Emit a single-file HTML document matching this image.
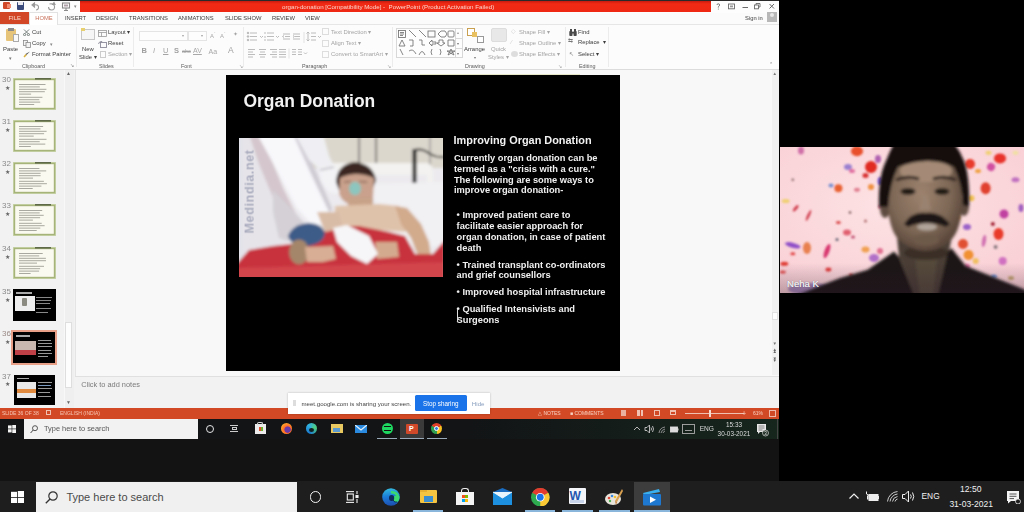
<!DOCTYPE html>
<html><head><meta charset="utf-8">
<style>
*{margin:0;padding:0;box-sizing:border-box}
#ppt{filter:blur(0.35px)}
html,body{width:1024px;height:512px;overflow:hidden;background:#000;font-family:"Liberation Sans",sans-serif}
.a{position:absolute}
#ppt{left:0;top:0;width:779px;height:408px;background:#f8f8f8;overflow:hidden}
.t{position:absolute;white-space:nowrap;line-height:1}
</style></head><body>
<!-- PowerPoint window -->
<div id="ppt" class="a">
  <!-- title bar -->
  <div class="a" style="left:0;top:0;width:779px;height:13px;background:#fdfdfd"></div>
  <div class="a" style="left:0;top:0;width:779px;height:1px;background:#2a2a2a"></div>
  <div class="a" style="left:80px;top:1px;width:631px;height:11px;background:linear-gradient(#c81a10,#f02a14 25%,#ee2812)"></div>
  <!-- tabs row -->
  <div class="a" style="left:0;top:13px;width:779px;height:11px;background:#fbfbfb"></div>
  <div class="a" style="left:0;top:12px;width:29px;height:12px;background:#d24625"></div>
  <!-- ribbon -->
  <div class="a" style="left:0;top:24px;width:779px;height:45px;background:#fcfcfc;border-top:1px solid #e6e6e6"></div>
  <div class="a" style="left:0;top:69px;width:779px;height:1px;background:#dcdcdc"></div>
  <!-- QAT icons -->
  <div class="a" style="left:3px;top:2px;width:7px;height:7px;background:#d04a2a;border-radius:1px"></div>
  <div class="a" style="left:7px;top:4px;width:4px;height:4px;background:#f08a70"></div>
  <div class="a" style="left:17px;top:2px;width:7px;height:8px;background:#3a4a7a;border-radius:1px"></div>
  <div class="a" style="left:18px;top:2px;width:5px;height:3px;background:#e8e8f0"></div>
  <svg class="a" style="left:30px;top:1px" width="42" height="11" viewBox="0 0 42 11" fill="none" stroke="#9a9a9a" stroke-width="1.1">
    <path d="M2 4 L4.5 2 L4.5 6 Z" fill="#9a9a9a"/><path d="M4 4 Q9 3 8.5 7 Q8 9 6 9"/>
    <path d="M19.5 3 Q23.5 2 24.5 5 Q25 9 21.5 9 Q18.5 9 18.5 6" /><path d="M24 1.5 L25 3.5 L22.5 3.5Z" fill="#9a9a9a"/>
    <rect x="32.5" y="2" width="7" height="5" stroke="#8a8a8a"/><rect x="34" y="3.5" width="4" height="2" fill="#b0a0a8" stroke="none"/><path d="M36 7 L36 9.5 M34 9.5 L38 9.5" stroke="#8a8a8a"/>
  </svg>
  <div class="t" style="left:74px;top:4px;font-size:5px;color:#888">&#9662;</div>
  <div class="t" style="left:282px;top:3.5px;font-size:6.2px;color:#fcd4cc">organ-donation [Compatibility Mode] - &nbsp;PowerPoint (Product Activation Failed)</div>
  <!-- window controls -->
  <svg class="a" style="left:712px;top:1px" width="67" height="11" viewBox="0 0 67 11" fill="none" stroke="#6a6a6a" stroke-width="0.9">
    <path d="M5 4 Q5 2.8 6.3 2.8 Q7.6 2.8 7.6 4 Q7.6 5 6.5 5.5 L6.3 6.6"/><circle cx="6.3" cy="7.9" r="0.5" fill="#6a6a6a" stroke="none"/>
    <rect x="16.5" y="3" width="6" height="4.8"/><rect x="18" y="4.5" width="3" height="1.8" fill="#999" stroke="none"/>
    <line x1="30.5" y1="6.5" x2="36" y2="6.5" stroke-width="1"/>
    <rect x="42.5" y="4" width="4" height="3.8"/><path d="M44 4 L44 2.5 L48 2.5 L48 6 L46.5 6"/>
    <path d="M57.5 3 L62 7.5 M62 3 L57.5 7.5" stroke-width="1"/>
  </svg>
  <!-- tabs -->
  <div class="t" style="left:8.5px;top:16.3px;font-size:5.8px;color:#f8dccc">FILE</div>
  <div class="a" style="left:29px;top:12px;width:29px;height:13px;background:#fff;border:1px solid #e2e2e2;border-bottom:none"></div>
  <div class="t" style="left:35.3px;top:16px;font-size:5.8px;color:#c8705a">HOME</div>
  <div class="t" style="left:65px;top:16px;font-size:5.8px;color:#3c3c3c">INSERT</div>
  <div class="t" style="left:96px;top:16px;font-size:5.8px;color:#3c3c3c">DESIGN</div>
  <div class="t" style="left:129px;top:16px;font-size:5.8px;color:#3c3c3c">TRANSITIONS</div>
  <div class="t" style="left:178px;top:16px;font-size:5.8px;color:#3c3c3c">ANIMATIONS</div>
  <div class="t" style="left:225px;top:16px;font-size:5.8px;color:#3c3c3c">SLIDE SHOW</div>
  <div class="t" style="left:272px;top:16px;font-size:5.8px;color:#3c3c3c">REVIEW</div>
  <div class="t" style="left:305px;top:16px;font-size:5.8px;color:#3c3c3c">VIEW</div>
  <div class="t" style="left:745px;top:16px;font-size:5.8px;color:#3c3c3c">Sign in</div>
  <div class="a" style="left:767px;top:12px;width:10px;height:10px;background:#b8b8b8"></div>
  <div class="a" style="left:770px;top:13px;width:4px;height:4px;background:#e8e8e8;border-radius:50%"></div>
  <!-- Clipboard group -->
  <div class="a" style="left:6px;top:29px;width:10px;height:12px;background:#e6c47a;border-radius:1px"></div>
  <div class="a" style="left:8px;top:28px;width:6px;height:3px;background:#8a8a8a"></div>
  <div class="a" style="left:13px;top:34px;width:6px;height:8px;background:#fafafa;border:1px solid #aaa"></div>
  <div class="t" style="left:3px;top:47px;font-size:5.9px;color:#3c3c3c">Paste</div>
  <div class="t" style="left:9px;top:56px;font-size:5px;color:#777">&#9662;</div>
  <svg class="a" style="left:22.5px;top:28.5px" width="7" height="7" viewBox="0 0 7 7" fill="none" stroke="#6a7470" stroke-width="0.9"><path d="M1 0.5 L5 4.5 M6 0.5 L2 4.5"/><circle cx="1.6" cy="5.6" r="1.1"/><circle cx="5.4" cy="5.6" r="1.1"/></svg>
  <div class="t" style="left:32px;top:30px;font-size:5.9px;color:#3c3c3c">Cut</div>
  <svg class="a" style="left:22.5px;top:39.5px" width="8" height="8" viewBox="0 0 8 8" fill="#f4f4f4" stroke="#8a8a8a" stroke-width="0.8"><rect x="0.5" y="0.5" width="4" height="5"/><rect x="3" y="2.5" width="4.5" height="5"/></svg>
  <div class="t" style="left:32px;top:40.5px;font-size:5.9px;color:#3c3c3c">Copy</div>
  <div class="t" style="left:50px;top:42px;font-size:5px;color:#888">&#9662;</div>
  <svg class="a" style="left:22.5px;top:51px" width="8" height="7" viewBox="0 0 8 7"><path d="M7 0.5 L3.5 4 L2.5 3 Z" fill="#555"/><path d="M2.5 3 L3.8 4.3 L1.5 6.5 L0.5 5.5 Z" fill="#d8b040"/></svg>
  <div class="t" style="left:32px;top:52px;font-size:5.9px;color:#3c3c3c">Format Painter</div>
  <div class="t" style="left:22px;top:63.7px;font-size:5.4px;color:#5a5a5a">Clipboard</div>
  <div class="t" style="left:70px;top:63px;font-size:5px;color:#888">&#x2198;</div>
  <div class="a" style="left:76px;top:27px;width:1px;height:40px;background:#ececec"></div>
  <!-- Slides group -->
  <div class="a" style="left:81px;top:29px;width:14px;height:11px;background:#f6f6f6;border:1px solid #c8c8c8"></div>
  <div class="a" style="left:81px;top:28px;width:4px;height:3px;background:#e8d070"></div>
  <div class="t" style="left:82px;top:47px;font-size:5.9px;color:#3c3c3c">New</div>
  <div class="t" style="left:79px;top:54.5px;font-size:5.9px;color:#3c3c3c">Slide &#9662;</div>
  <svg class="a" style="left:98px;top:29.5px" width="9" height="7" viewBox="0 0 9 7" fill="none" stroke="#9a9a9a" stroke-width="0.8"><rect x="0.5" y="0.5" width="8" height="6"/><line x1="0.5" y1="2.5" x2="8.5" y2="2.5"/><line x1="3.5" y1="2.5" x2="3.5" y2="6.5"/></svg>
  <div class="t" style="left:108px;top:30px;font-size:5.9px;color:#3c3c3c">Layout &#9662;</div>
  <svg class="a" style="left:98px;top:40.5px" width="9" height="7" viewBox="0 0 9 7" fill="none" stroke="#8a8a9a" stroke-width="0.9"><rect x="2.5" y="1.5" width="6" height="5"/><path d="M0.5 3 Q1 0.5 3.5 0.5"/><path d="M2.5 0 L3.8 0.6 L2.8 1.6"/></svg>
  <div class="t" style="left:108px;top:40.5px;font-size:5.9px;color:#3c3c3c">Reset</div>
  <div class="a" style="left:100px;top:51px;width:6px;height:7px;border:1px solid #ccc"></div>
  <div class="t" style="left:108px;top:52px;font-size:5.9px;color:#a4a4a4">Section &#9662;</div>
  <div class="t" style="left:99px;top:63.7px;font-size:5.4px;color:#5a5a5a">Slides</div>
  <div class="a" style="left:133px;top:27px;width:1px;height:40px;background:#ececec"></div>
  <!-- Font group -->
  <div class="a" style="left:139px;top:31px;width:49px;height:10px;border:1px solid #e4e4e4;background:#fdfdfd"></div>
  <div class="a" style="left:188px;top:31px;width:19px;height:10px;border:1px solid #e4e4e4;background:#fdfdfd"></div>
  <div class="t" style="left:182px;top:34px;font-size:4px;color:#a4a4a4">&#9662;</div>
  <div class="t" style="left:201px;top:34px;font-size:4px;color:#a4a4a4">&#9662;</div>
  <div class="t" style="left:210px;top:32px;font-size:5.9px;color:#aaa">A<sup style="font-size:4px">&#710;</sup></div>
  <div class="t" style="left:220px;top:32px;font-size:5.9px;color:#aaa">A<sup style="font-size:4px">&#711;</sup></div>
  <div class="t" style="left:233px;top:32px;font-size:5.9px;color:#a4a4a4">&#x2726;</div>
  <div class="t" style="left:141.5px;top:47px;font-size:7.5px;color:#a0a0a0;font-weight:bold">B</div>
  <div class="t" style="left:153px;top:47px;font-size:7.5px;color:#a8a8a8;font-style:italic">I</div>
  <div class="t" style="left:163px;top:47px;font-size:7.5px;color:#a4a4a4;text-decoration:underline">U</div>
  <div class="t" style="left:174px;top:47px;font-size:7.5px;color:#a0a0a0;font-weight:bold">S</div>
  <div class="t" style="left:182px;top:49px;font-size:5.5px;color:#a0a0a0;text-decoration:line-through">abc</div>
  <div class="t" style="left:193px;top:47px;font-size:7px;color:#a8a8a8;text-decoration:underline">AV</div>
  <div class="t" style="left:208.5px;top:47.5px;font-size:7px;color:#a8a8a8">Aa</div>
  <div class="t" style="left:228px;top:46px;font-size:8.5px;color:#a0a0a0">A</div>
  <div class="t" style="left:181px;top:63.7px;font-size:5.4px;color:#5a5a5a">Font</div>
  <div class="t" style="left:239px;top:64px;font-size:5px;color:#a4a4a4">&#x2198;</div>
  <div class="a" style="left:243px;top:27px;width:1px;height:40px;background:#ececec"></div>
  <!-- Paragraph group -->
  <svg class="a" style="left:244px;top:29.5px" width="78" height="29" viewBox="0 0 78 27" fill="none" stroke="#b4b4b4" stroke-width="0.9">
    <g><circle cx="4" cy="2" r="0.8" fill="#b4b4b4"/><circle cx="4" cy="5.5" r="0.8" fill="#b4b4b4"/><circle cx="4" cy="9" r="0.8" fill="#b4b4b4"/><line x1="6" y1="2" x2="13" y2="2"/><line x1="6" y1="5.5" x2="13" y2="5.5"/><line x1="6" y1="9" x2="13" y2="9"/><path d="M16 5 L17.5 6.5 L19 5" /></g>
    <g><line x1="21" y1="1" x2="21" y2="3" /><line x1="21" y1="5" x2="21" y2="7"/><line x1="21" y1="8" x2="21" y2="10"/><line x1="23" y1="2" x2="30" y2="2"/><line x1="23" y1="5.5" x2="30" y2="5.5"/><line x1="23" y1="9" x2="30" y2="9"/><path d="M32 5 L33.5 6.5 L35 5"/></g>
    <g><line x1="39" y1="3" x2="46" y2="3"/><line x1="41" y1="5.5" x2="46" y2="5.5"/><line x1="39" y1="8" x2="46" y2="8"/><path d="M40 4.5 L38.5 5.5 L40 6.5"/></g>
    <g><line x1="49" y1="3" x2="56" y2="3"/><line x1="51" y1="5.5" x2="56" y2="5.5"/><line x1="49" y1="8" x2="56" y2="8"/><path d="M49 4.5 L50.5 5.5 L49 6.5"/></g>
    <line x1="60" y1="1" x2="60" y2="12" stroke="#e0e0e0"/>
    <g><line x1="64" y1="1" x2="64" y2="10"/><path d="M62.5 2.5 L64 1 L65.5 2.5 M62.5 8.5 L64 10 L65.5 8.5"/><line x1="67" y1="2" x2="72" y2="2"/><line x1="67" y1="5.5" x2="72" y2="5.5"/><line x1="67" y1="9" x2="72" y2="9"/><path d="M74 5 L75.5 6.5 L77 5"/></g>
    <g transform="translate(0 17.5)"><line x1="4" y1="1" x2="11" y2="1"/><line x1="4" y1="3.5" x2="9" y2="3.5"/><line x1="4" y1="6" x2="11" y2="6"/><line x1="4" y1="8.5" x2="9" y2="8.5"/>
    <line x1="15" y1="1" x2="22" y2="1"/><line x1="16" y1="3.5" x2="21" y2="3.5"/><line x1="15" y1="6" x2="22" y2="6"/><line x1="16" y1="8.5" x2="21" y2="8.5"/>
    <line x1="26" y1="1" x2="33" y2="1"/><line x1="28" y1="3.5" x2="33" y2="3.5"/><line x1="26" y1="6" x2="33" y2="6"/><line x1="28" y1="8.5" x2="33" y2="8.5"/>
    <line x1="35" y1="1" x2="42" y2="1"/><line x1="35" y1="3.5" x2="42" y2="3.5"/><line x1="35" y1="6" x2="42" y2="6"/><line x1="35" y1="8.5" x2="42" y2="8.5"/>
    <line x1="45" y1="0" x2="45" y2="10" stroke="#e0e0e0"/>
    <line x1="48" y1="1" x2="52" y2="1"/><line x1="48" y1="3.5" x2="52" y2="3.5"/><line x1="48" y1="6" x2="52" y2="6"/><line x1="54" y1="1" x2="58" y2="1"/><line x1="54" y1="3.5" x2="58" y2="3.5"/><line x1="54" y1="6" x2="58" y2="6"/><path d="M60 4 L61.5 5.5 L63 4"/></g>
  </svg>
  <div class="a" style="left:322px;top:28px;width:7px;height:7px;border:1px solid #ddd"></div>
  <div class="t" style="left:331px;top:30px;font-size:5.9px;color:#a4a4a4">Text Direction &#9662;</div>
  <div class="a" style="left:322px;top:40px;width:7px;height:7px;border:1px solid #ddd"></div>
  <div class="t" style="left:331px;top:40.5px;font-size:5.9px;color:#a4a4a4">Align Text &#9662;</div>
  <div class="a" style="left:322px;top:51px;width:7px;height:7px;border:1px solid #ddd"></div>
  <div class="t" style="left:331px;top:52px;font-size:5.9px;color:#a4a4a4">Convert to SmartArt &#9662;</div>
  <div class="t" style="left:302px;top:63.7px;font-size:5.4px;color:#5a5a5a">Paragraph</div>
  <div class="t" style="left:387px;top:64px;font-size:5px;color:#a4a4a4">&#x2198;</div>
  <div class="a" style="left:392px;top:27px;width:1px;height:40px;background:#ececec"></div>
  <!-- Drawing group -->
  <div class="a" style="left:396px;top:28px;width:67px;height:30px;border:1px solid #d8d8d8;background:#fdfdfd"></div>
  <div class="a" style="left:455px;top:28px;width:1px;height:30px;background:#d8d8d8"></div>
  <div class="a" style="left:455px;top:38px;width:8px;height:1px;background:#d8d8d8"></div>
  <div class="a" style="left:455px;top:48px;width:8px;height:1px;background:#d8d8d8"></div>
  <svg class="a" style="left:397px;top:29px" width="58" height="28" viewBox="0 0 58 28" fill="none" stroke="#707070" stroke-width="0.85">
    <rect x="1.5" y="1.5" width="7" height="7"/><line x1="3" y1="3.5" x2="7" y2="3.5"/><line x1="3" y1="5" x2="7" y2="5"/><line x1="3" y1="6.5" x2="6" y2="6.5"/>
    <line x1="12" y1="1" x2="19" y2="8"/><line x1="22" y1="1" x2="29" y2="8"/>
    <rect x="31" y="2" width="7" height="6"/><path d="M41 5 L44 2 L48 2 L50 5 L48 8 L44 8 Z"/><rect x="51" y="2" width="6" height="6" rx="1"/>
    <path d="M2 17 L5 11 L8 17 Z"/><path d="M12 11 L16 11 L16 17 L13 17"/><path d="M22 11 L25 11 L25 16 L28 16"/>
    <path d="M32 14 L35 11 L35 13 L39 13 L39 15 L35 15 L35 17 Z"/><path d="M42 11 L46 11 L46 14 L48 14 L44 17 L40 14 L42 14Z"/><path d="M51 11 L57 11 L57 17 L51 17Z"/>
    <path d="M3 20 L6 26"/><path d="M12 22 Q16 19 19 25"/><path d="M22 26 Q25 19 28 26"/>
    <path d="M35 20 Q33 23 35 26"/><path d="M43 20 Q45 23 43 26"/><path d="M51 26 L54 20 L57 26 L50 22 L58 22Z"/>
  </svg>
  <div class="t" style="left:457px;top:31px;font-size:4px;color:#999">&#9652;</div>
  <div class="t" style="left:457px;top:41.5px;font-size:4px;color:#777">&#9662;</div>
  <div class="t" style="left:457px;top:52px;font-size:4px;color:#777">&#9662;</div>
  <div class="a" style="left:467px;top:28px;width:8px;height:8px;border:1px solid #c8a050;background:#fff"></div>
  <div class="a" style="left:472px;top:32px;width:5px;height:5px;background:#e8c060"></div>
  <div class="a" style="left:477px;top:36px;width:7px;height:7px;border:1px solid #999;background:#fff"></div>
  <div class="t" style="left:464px;top:47px;font-size:5.9px;color:#3c3c3c">Arrange</div>
  <div class="t" style="left:474px;top:56px;font-size:4px;color:#777">&#9662;</div>
  <div class="a" style="left:491px;top:28px;width:16px;height:14px;background:#e8e8e8;border:1px solid #ddd;border-radius:2px"></div>
  <div class="t" style="left:491px;top:47px;font-size:5.9px;color:#a4a4a4">Quick</div>
  <div class="t" style="left:488px;top:54.5px;font-size:5.9px;color:#a4a4a4">Styles &#9662;</div>
  <div class="t" style="left:511px;top:29px;font-size:5.9px;color:#ccc">&#x25C7;</div>
  <div class="t" style="left:519px;top:30px;font-size:5.9px;color:#a4a4a4">Shape Fill &#9662;</div>
  <div class="t" style="left:511px;top:39.5px;font-size:5.9px;color:#ccc">&#x2215;</div>
  <div class="t" style="left:519px;top:40.5px;font-size:5.9px;color:#a4a4a4">Shape Outline &#9662;</div>
  <div class="a" style="left:511px;top:51px;width:7px;height:6px;background:#ddd;border-radius:50%"></div>
  <div class="t" style="left:519px;top:52px;font-size:5.9px;color:#a4a4a4">Shape Effects &#9662;</div>
  <div class="t" style="left:465px;top:63.7px;font-size:5.4px;color:#5a5a5a">Drawing</div>
  <div class="t" style="left:558px;top:64px;font-size:5px;color:#a4a4a4">&#x2198;</div>
  <div class="a" style="left:565px;top:27px;width:1px;height:40px;background:#ececec"></div>
  <!-- Editing group -->
  <svg class="a" style="left:569px;top:28.5px" width="8" height="7" viewBox="0 0 8 7"><rect x="0.3" y="2" width="3.2" height="5" rx="0.8" fill="#4a4a4a"/><rect x="4.5" y="2" width="3.2" height="5" rx="0.8" fill="#4a4a4a"/><rect x="1" y="0" width="2" height="2.5" fill="#4a4a4a"/><rect x="5" y="0" width="2" height="2.5" fill="#4a4a4a"/><rect x="3" y="3" width="2" height="1.5" fill="#4a4a4a"/></svg>
  <div class="t" style="left:578px;top:29.5px;font-size:5.9px;color:#3c3c3c">Find</div>
  <div class="t" style="left:568px;top:39px;font-size:5.9px;color:#777">&#x21C6;</div>
  <div class="t" style="left:578px;top:40px;font-size:5.9px;color:#3c3c3c">Replace &nbsp;&#9662;</div>
  <div class="t" style="left:569px;top:51.5px;font-size:5.9px;color:#777">&#x2196;</div>
  <div class="t" style="left:578px;top:51.5px;font-size:5.9px;color:#3c3c3c">Select &#9662;</div>
  <div class="t" style="left:579px;top:63.7px;font-size:5.4px;color:#5a5a5a">Editing</div>
  <div class="a" style="left:608px;top:27px;width:1px;height:40px;background:#ececec"></div>
  <div class="t" style="left:769px;top:62px;font-size:5px;color:#777">&#8963;</div>
  <!-- thumbnails pane -->
  <div class="a" style="left:0;top:70px;width:75px;height:338px;background:#f2f2f2"></div>
  <div class="a" style="left:64px;top:70px;width:10px;height:338px;background:#efefef;border-left:1px solid #f8f8f8"></div>
  <div class="a" style="left:65px;top:322px;width:7px;height:66px;background:#fdfdfd;border:1px solid #dedede"></div>
  <div class="t" style="left:66px;top:71px;font-size:5px;color:#666">&#9650;</div>
  <div class="t" style="left:66px;top:400px;font-size:5px;color:#666">&#9660;</div>
  <div class="a" style="left:75px;top:70px;width:1px;height:338px;background:#e4e4e4"></div>
  <!-- 30..34 green thumbs -->
  <div class="t" style="left:2px;top:76px;font-size:8px;color:#8a8a8a">30</div>
  <div class="t" style="left:5px;top:85px;font-size:6px;color:#666">&#9733;</div>
  <svg class="a" style="left:13px;top:78px" width="43" height="32" viewBox="0 0 43 32"><rect x="0" y="0" width="43" height="32" fill="#c8d4a8"/><rect x="0.8" y="0.8" width="41.4" height="30.4" fill="#a6b47a"/><rect x="2.2" y="2.2" width="38.6" height="27.6" fill="#fbfaf0"/><rect x="22" y="0" width="16" height="1.6" fill="#5e6a48"/><rect x="6" y="6" width="26.5" height="1" fill="#a8a8a0"/><rect x="6" y="8.4" width="20.8" height="1" fill="#a8a8a0"/><rect x="6" y="10.8" width="27.4" height="1" fill="#a8a8a0"/><rect x="6" y="13.2" width="25.8" height="1" fill="#a8a8a0"/><rect x="6" y="15.6" width="12.1" height="1" fill="#a8a8a0"/><rect x="6" y="18.8" width="23.4" height="1" fill="#a8a8a0"/><rect x="6" y="21.2" width="20.3" height="1" fill="#a8a8a0"/><rect x="6" y="23.6" width="21.2" height="1" fill="#a8a8a0"/><rect x="6" y="26" width="15.2" height="1" fill="#a8a8a0"/></svg>
  <div class="t" style="left:2px;top:118px;font-size:8px;color:#8a8a8a">31</div>
  <div class="t" style="left:5px;top:127px;font-size:6px;color:#666">&#9733;</div>
  <svg class="a" style="left:13px;top:120px" width="43" height="32" viewBox="0 0 43 32"><rect x="0" y="0" width="43" height="32" fill="#c8d4a8"/><rect x="0.8" y="0.8" width="41.4" height="30.4" fill="#a6b47a"/><rect x="2.2" y="2.2" width="38.6" height="27.6" fill="#fbfaf0"/><rect x="22" y="0" width="16" height="1.6" fill="#5e6a48"/><rect x="6" y="6" width="24.1" height="1" fill="#a8a8a0"/><rect x="6" y="8.4" width="21.5" height="1" fill="#a8a8a0"/><rect x="6" y="10.8" width="27.6" height="1" fill="#a8a8a0"/><rect x="6" y="13.2" width="25.1" height="1" fill="#a8a8a0"/><rect x="6" y="15.6" width="14.7" height="1" fill="#a8a8a0"/><rect x="6" y="18.8" width="27.5" height="1" fill="#a8a8a0"/><rect x="6" y="21.2" width="20.7" height="1" fill="#a8a8a0"/><rect x="6" y="23.6" width="26.3" height="1" fill="#a8a8a0"/><rect x="6" y="26" width="11.8" height="1" fill="#a8a8a0"/></svg>
  <div class="t" style="left:2px;top:160px;font-size:8px;color:#8a8a8a">32</div>
  <div class="t" style="left:5px;top:169px;font-size:6px;color:#666">&#9733;</div>
  <svg class="a" style="left:13px;top:162px" width="43" height="32" viewBox="0 0 43 32"><rect x="0" y="0" width="43" height="32" fill="#c8d4a8"/><rect x="0.8" y="0.8" width="41.4" height="30.4" fill="#a6b47a"/><rect x="2.2" y="2.2" width="38.6" height="27.6" fill="#fbfaf0"/><rect x="22" y="0" width="16" height="1.6" fill="#5e6a48"/><rect x="6" y="6" width="20.4" height="1" fill="#a8a8a0"/><rect x="6" y="8.4" width="27.2" height="1" fill="#a8a8a0"/><rect x="6" y="10.8" width="21.6" height="1" fill="#a8a8a0"/><rect x="6" y="13.2" width="21.6" height="1" fill="#a8a8a0"/><rect x="6" y="15.6" width="14.0" height="1" fill="#a8a8a0"/><rect x="6" y="18.8" width="24.9" height="1" fill="#a8a8a0"/><rect x="6" y="21.2" width="27.9" height="1" fill="#a8a8a0"/><rect x="6" y="23.6" width="22.4" height="1" fill="#a8a8a0"/><rect x="6" y="26" width="13.7" height="1" fill="#a8a8a0"/></svg>
  <div class="t" style="left:2px;top:202px;font-size:8px;color:#8a8a8a">33</div>
  <div class="t" style="left:5px;top:211px;font-size:6px;color:#666">&#9733;</div>
  <svg class="a" style="left:13px;top:204px" width="43" height="32" viewBox="0 0 43 32"><rect x="0" y="0" width="43" height="32" fill="#c8d4a8"/><rect x="0.8" y="0.8" width="41.4" height="30.4" fill="#a6b47a"/><rect x="2.2" y="2.2" width="38.6" height="27.6" fill="#fbfaf0"/><rect x="22" y="0" width="16" height="1.6" fill="#5e6a48"/><rect x="6" y="6" width="23.2" height="1" fill="#a8a8a0"/><rect x="6" y="8.4" width="20.7" height="1" fill="#a8a8a0"/><rect x="6" y="10.8" width="24.7" height="1" fill="#a8a8a0"/><rect x="6" y="13.2" width="21.1" height="1" fill="#a8a8a0"/><rect x="6" y="15.6" width="13.9" height="1" fill="#a8a8a0"/><rect x="6" y="18.8" width="22.7" height="1" fill="#a8a8a0"/><rect x="6" y="21.2" width="25.6" height="1" fill="#a8a8a0"/><rect x="6" y="23.6" width="21.3" height="1" fill="#a8a8a0"/><rect x="6" y="26" width="17.7" height="1" fill="#a8a8a0"/></svg>
  <div class="t" style="left:2px;top:245px;font-size:8px;color:#8a8a8a">34</div>
  <div class="t" style="left:5px;top:254px;font-size:6px;color:#666">&#9733;</div>
  <svg class="a" style="left:13px;top:247px" width="43" height="32" viewBox="0 0 43 32"><rect x="0" y="0" width="43" height="32" fill="#c8d4a8"/><rect x="0.8" y="0.8" width="41.4" height="30.4" fill="#a6b47a"/><rect x="2.2" y="2.2" width="38.6" height="27.6" fill="#fbfaf0"/><rect x="22" y="0" width="16" height="1.6" fill="#5e6a48"/><rect x="6" y="6" width="23.7" height="1" fill="#a8a8a0"/><rect x="6" y="8.4" width="20.2" height="1" fill="#a8a8a0"/><rect x="6" y="10.8" width="26.9" height="1" fill="#a8a8a0"/><rect x="6" y="13.2" width="27.0" height="1" fill="#a8a8a0"/><rect x="6" y="15.6" width="18.0" height="1" fill="#a8a8a0"/><rect x="6" y="18.8" width="25.0" height="1" fill="#a8a8a0"/><rect x="6" y="21.2" width="21.1" height="1" fill="#a8a8a0"/><rect x="6" y="23.6" width="20.1" height="1" fill="#a8a8a0"/><rect x="6" y="26" width="11.6" height="1" fill="#a8a8a0"/></svg>
  <!-- 35 -->
  <div class="t" style="left:2px;top:288px;font-size:8px;color:#8a8a8a">35</div>
  <div class="t" style="left:5px;top:297px;font-size:6px;color:#666">&#9733;</div>
  <div class="a" style="left:13px;top:289px;width:43px;height:32px;background:#000">
    <div class="a" style="left:3px;top:3px;width:16px;height:1.5px;background:#aaa"></div>
    <div class="a" style="left:2px;top:7px;width:20px;height:15px;background:#eeeeee"></div>
    <div class="a" style="left:9px;top:9px;width:5px;height:8px;background:#8a8a80;border-radius:1px"></div>
    <div class="a" style="left:23px;top:8px;width:16px;height:1px;background:#888"></div>
    <div class="a" style="left:23px;top:11px;width:15px;height:1px;background:#888"></div>
    <div class="a" style="left:23px;top:14px;width:14px;height:1px;background:#888"></div>
    <div class="a" style="left:23px;top:19px;width:15px;height:1px;background:#888"></div>
    <div class="a" style="left:23px;top:23px;width:12px;height:1px;background:#888"></div>
  </div>
  <!-- 36 selected -->
  <div class="t" style="left:2px;top:330px;font-size:8px;color:#9a8a86">36</div>
  <div class="t" style="left:5px;top:339px;font-size:6px;color:#666">&#9733;</div>
  <div class="a" style="left:11px;top:330px;width:46px;height:35px;background:#e8a088"></div>
  <div class="a" style="left:13px;top:332px;width:42px;height:31px;background:#000">
    <div class="a" style="left:3px;top:3px;width:14px;height:1.5px;background:#aaa"></div>
    <div class="a" style="left:2px;top:9px;width:21px;height:14px;background:#c8b8b0"></div>
    <div class="a" style="left:2px;top:18px;width:21px;height:5px;background:#c04048"></div>
    <div class="a" style="left:25px;top:8px;width:13px;height:1px;background:#999"></div>
    <div class="a" style="left:25px;top:11px;width:14px;height:1px;background:#999"></div>
    <div class="a" style="left:25px;top:14px;width:14px;height:1px;background:#999"></div>
    <div class="a" style="left:25px;top:18px;width:13px;height:1px;background:#999"></div>
    <div class="a" style="left:25px;top:21px;width:14px;height:1px;background:#999"></div>
    <div class="a" style="left:25px;top:24px;width:10px;height:1px;background:#999"></div>
  </div>
  <!-- 37 -->
  <div class="t" style="left:2px;top:373px;font-size:8px;color:#8a8a8a">37</div>
  <div class="t" style="left:5px;top:381px;font-size:6px;color:#666">&#9733;</div>
  <div class="a" style="left:14px;top:374.5px;width:41px;height:30px;background:#000">
    <div class="a" style="left:3px;top:3px;width:12px;height:1.5px;background:#aaa"></div>
    <div class="a" style="left:3px;top:7px;width:19px;height:16px;background:#e8e8e8"></div>
    <div class="a" style="left:3px;top:14px;width:19px;height:4px;background:#e08a40"></div>
    <div class="a" style="left:24px;top:7px;width:14px;height:1px;background:#999"></div>
    <div class="a" style="left:24px;top:10px;width:13px;height:1px;background:#7a9ac0"></div>
    <div class="a" style="left:24px;top:13px;width:14px;height:1px;background:#999"></div>
    <div class="a" style="left:24px;top:17px;width:12px;height:1px;background:#999"></div>
    <div class="a" style="left:24px;top:21px;width:13px;height:1px;background:#999"></div>
  </div>
  <!-- slide -->
  <div class="a" style="left:226px;top:75px;width:394px;height:296px;background:#000;overflow:hidden">
    <div class="t" style="left:17.5px;top:17.6px;font-size:17.45px;font-weight:bold;color:#f2f2f2">Organ Donation</div>
    <svg class="a" style="left:13px;top:62.5px" width="204" height="139" viewBox="0 0 204 139">
      <defs>
        <filter id="bl2" x="-10%" y="-10%" width="120%" height="120%"><feGaussianBlur stdDeviation="0.6"/></filter>
        <filter id="bl" x="-5%" y="-5%" width="110%" height="110%"><feGaussianBlur stdDeviation="1.4"/></filter>
        <linearGradient id="wall" x1="0" y1="0" x2="0" y2="1"><stop offset="0" stop-color="#d9d5cd"/><stop offset="1" stop-color="#e4e2e0"/></linearGradient>
        <linearGradient id="skin" x1="0" y1="0" x2="1" y2="1"><stop offset="0" stop-color="#d4ac8c"/><stop offset="1" stop-color="#b88a6c"/></linearGradient>
      </defs>
      <g filter="url(#bl)">
        <rect x="-4" y="-4" width="212" height="147" fill="#eceaee"/>
        <!-- wall -->
        <rect x="70" y="-4" width="138" height="34" fill="#dcd7cd"/>
        <!-- wires -->
        <rect x="119.5" y="-4" width="1.3" height="29" fill="#4a4a4a"/>
        <rect x="136.5" y="-4" width="1.3" height="31" fill="#3a3a3a"/>
        <rect x="190.5" y="-4" width="1" height="36" fill="#777"/>
        <!-- headboard rail -->
        <path d="M90 25 L188 25 Q194 26 194 34 L194 46 L188 46 L188 37 L90 37 Z" fill="#f3f2f0"/>
        <rect x="173.5" y="11" width="4" height="36" fill="#181818"/>
        <path d="M175 12 Q184 10 191 16 Q198 20 206 19" stroke="#222" stroke-width="1.8" fill="none"/>
        <!-- pillow -->
        <path d="M128 46 L206 44 L206 108 L170 108 L150 92 Z" fill="#f1f0f3"/>
        <!-- coat body & shadows -->
        <path d="M-4 -4 L16 -4 L30 30 L44 60 L56 84 L48 104 L30 112 L-4 124 Z" fill="#e6e4e9"/>
        <path d="M10 -4 L22 -4 L44 50 L60 82 L50 96 L36 64 L20 26 Z" fill="#d4c6cc"/>
        <path d="M34 52 L52 70 L66 86 L52 104 L40 100 L34 74 Z" fill="#d4d0d6"/>
        <rect x="-4" y="-4" width="8" height="130" fill="#e2e2ea"/>
        <!-- main sleeve -->
        <path d="M18 -4 L54 -4 L72 32 L94 72 L90 86 L74 88 L58 70 L40 36 Z" fill="#f8f8fb"/>
        <path d="M54 -4 L60 -4 L80 40 L94 72 L90 74 L72 36 Z" fill="#d0ccd4"/>
        <!-- other sleeve -->
        <path d="M56 -4 L84 -4 L90 18 L96 30 L86 36 L70 22 Z" fill="#efeff3"/>
        <path d="M80 30 L96 27 L102 40 L100 56 L90 54 L82 44 Z" fill="#f3f3f6"/>
        <path d="M81 32 L95 29" stroke="#9a9aa0" stroke-width="1.2"/>
        <!-- patient head -->
        <path d="M97 44 Q98 26 116 24 Q134 26 137 42 L134 50 L100 52 Z" fill="#3a2820"/>
        <path d="M101 40 Q117 32 135 40 L134 60 Q124 68 116 68 Q104 66 100 56 Z" fill="#c9a18c"/>
        <ellipse cx="116" cy="50.5" rx="6" ry="6.8" fill="#8cc6be"/>
        <path d="M105 44 L112 43.5 M120 43.5 L128 44" stroke="#6a4a3a" stroke-width="1"/>
        <path d="M109 60 L134 60 L134 74 L109 74 Z" fill="#c8a288"/>
        <!-- chest -->
        <path d="M96 68 L140 66 L160 68 L172 80 L166 94 L140 92 L110 92 L96 90 Z" fill="#dfc2aa"/>
        <!-- right arm -->
        <path d="M156 68 L168 70 L182 86 L190 104 L192 118 L180 120 L172 100 L162 86 Z" fill="#d2aa8c"/>
        <!-- red blanket -->
        <path d="M-4 128 L10 112 L34 108 L52 106 L74 100 L94 88 L120 88 L150 94 L166 98 L176 116 L194 116 L206 102 L206 143 L-4 143 Z" fill="#c8323e"/>
        <path d="M-4 130 L206 124 L206 143 L-4 143 Z" fill="#d2444c"/>
        <!-- doctor wrist -->
        <path d="M78 74 L100 74 L104 90 L86 94 Z" fill="#d9bca6"/>
        <!-- blue cuff -->
        <path d="M49 98 Q54 86 70 85 Q84 86 86 96 Q84 106 68 108 Q52 108 49 98 Z" fill="#3c5c88"/>
        <!-- bulb & hands -->
        <ellipse cx="60" cy="114" rx="10" ry="12.5" fill="#a4866a"/>
        <path d="M66 109 L94 108 L97 121 L84 124 L68 124 Z" fill="#d8ae94"/>
        <path d="M136 104 L158 104 L160 119 L138 121 Z" fill="#d4aa8e"/>
        <!-- glove lower -->
        <path d="M94 90 L108 87 L130 98 L139 116 L128 126 L112 118 L98 104 Z" fill="#f6f6f8"/>
      </g>
      <text x="0" y="0" transform="translate(14.6 95.5) rotate(-90)" font-family="Liberation Sans" font-weight="bold" font-size="12.6" letter-spacing="0.6" fill="#acaec0" filter="url(#bl2)">Medindia.net</text>
    </svg>
    <div class="t" style="left:227.6px;top:59.6px;font-size:10.9px;font-weight:bold;color:#f2f2f2">Improving Organ Donation</div>
    <div class="t" style="left:227.9px;top:78.6px;font-size:9.3px;font-weight:bold;color:#f0f0f0">Currently organ donation can be</div>
    <div class="t" style="left:227.9px;top:89.8px;font-size:9.3px;font-weight:bold;color:#f0f0f0">termed as a "crisis with a cure."</div>
    <div class="t" style="left:227.9px;top:100.5px;font-size:9.3px;font-weight:bold;color:#f0f0f0">The following are some ways to</div>
    <div class="t" style="left:227.9px;top:111.2px;font-size:9.3px;font-weight:bold;color:#f0f0f0">improve organ donation-</div>
    <div class="t" style="left:230.6px;top:135.6px;font-size:9.3px;font-weight:bold;color:#f0f0f0">• Improved patient care to</div>
    <div class="t" style="left:230.6px;top:146.8px;font-size:9.3px;font-weight:bold;color:#f0f0f0">facilitate easier approach for</div>
    <div class="t" style="left:230.6px;top:157.5px;font-size:9.3px;font-weight:bold;color:#f0f0f0">organ donation, in case of patient</div>
    <div class="t" style="left:230.6px;top:168.7px;font-size:9.3px;font-weight:bold;color:#f0f0f0">death</div>
    <div class="t" style="left:230.6px;top:185.5px;font-size:9.3px;font-weight:bold;color:#f0f0f0">• Trained transplant co-ordinators</div>
    <div class="t" style="left:230.6px;top:195.8px;font-size:9.3px;font-weight:bold;color:#f0f0f0">and grief counsellors</div>
    <div class="t" style="left:230.6px;top:213.2px;font-size:9.3px;font-weight:bold;color:#f0f0f0">• Improved hospital infrastructure</div>
    <div class="t" style="left:230.6px;top:229.6px;font-size:9.3px;font-weight:bold;color:#f0f0f0">• Qualified Intensivists and</div>
    <div class="t" style="left:230.6px;top:240.8px;font-size:9.3px;font-weight:bold;color:#f0f0f0">Surgeons</div>
    <div class="a" style="left:231px;top:234px;width:1px;height:13px;background:#ddd"></div>
  </div>
  <div class="a" style="left:420px;top:74px;width:160px;height:1px;background:#e6e6c8"></div>
  <!-- notes -->
  <div class="a" style="left:75px;top:376px;width:704px;height:32px;background:#f2f2f2;border-top:1px solid #e0e0e0"></div>
  <div class="a" style="left:771px;top:70px;width:8px;height:305px;background:#f0f0f0;border-left:1px solid #f8f8f8"></div>
  <div class="a" style="left:772px;top:312px;width:6px;height:8px;background:#fdfdfd;border:1px solid #e0e0e0"></div>
  <div class="t" style="left:772.5px;top:71.5px;font-size:4.5px;color:#777">&#9650;</div>
  <div class="t" style="left:772.5px;top:342px;font-size:4.5px;color:#777">&#9660;</div>
  <div class="t" style="left:772.5px;top:349px;font-size:4.5px;color:#666;line-height:0.5">&#9650;<br>&#9650;</div>
  <div class="t" style="left:772.5px;top:358px;font-size:4.5px;color:#666;line-height:0.5">&#9660;<br>&#9660;</div>
</div>
<div class="a" style="left:0;top:0;width:779px;height:440px;filter:blur(0.3px)">
<!-- inner taskbar -->
<div class="a" style="left:0;top:419px;width:779px;height:20px;background:linear-gradient(90deg,#121416 0%,#121416 60%,#16261d 100%)"></div>
<!-- notes text -->
<div class="t" style="left:81.2px;top:380.6px;font-size:7.4px;color:#7a7a7a">Click to add notes</div>
<!-- status bar -->
<div class="a" style="left:0;top:407.5px;width:779px;height:11px;background:#d24a25"></div>
<div class="t" style="left:2px;top:410.5px;font-size:5px;color:#f6c8b8">SLIDE 36 OF 38</div>
<div class="a" style="left:46px;top:410px;width:5px;height:5px;border:1px solid #f0c0b0"></div>
<div class="t" style="left:60px;top:410.5px;font-size:5px;color:#f6c8b8">ENGLISH (INDIA)</div>
<div class="t" style="left:538px;top:410.5px;font-size:5px;color:#f6d0c0">&#9651; NOTES</div>
<div class="t" style="left:570px;top:410.5px;font-size:5px;color:#f6d0c0">&#9632; COMMENTS</div>
<div class="a" style="left:621px;top:410px;width:5px;height:6px;background:#eab0a0"></div>
<div class="a" style="left:637px;top:410px;width:6px;height:6px;background:repeating-linear-gradient(90deg,#f0c0b0 0 2.5px,transparent 2.5px 3.5px)"></div>
<div class="a" style="left:654px;top:410px;width:6px;height:6px;border:1px solid #f0c0b0"></div>
<div class="a" style="left:670px;top:410px;width:6px;height:5px;border:1px solid #f0c0b0;border-top-width:2px"></div>
<div class="a" style="left:685px;top:412.5px;width:59px;height:1px;background:#f0c0b0"></div>
<div class="a" style="left:709px;top:409.5px;width:2px;height:7px;background:#f6dcd0"></div>
<div class="t" style="left:742px;top:409.5px;font-size:7px;color:#f6d0c0">+</div>
<div class="t" style="left:753px;top:410.5px;font-size:5px;color:#f6d0c0">61%</div>
<div class="a" style="left:769px;top:409.5px;width:7px;height:7px;border:1px solid #f0b8a8"></div>
<!-- meet sharing bar -->
<div class="a" style="left:288px;top:392.5px;width:202px;height:21.5px;background:#fff;box-shadow:0 0 2px rgba(0,0,0,.25)"></div>
<div class="a" style="left:293px;top:400px;width:3px;height:6px;background:#ddd"></div>
<div class="t" style="left:301.5px;top:400.5px;font-size:6.1px;color:#444">meet.google.com is sharing your screen.</div>
<div class="a" style="left:415px;top:395.3px;width:51.5px;height:16px;background:#1a73e8;border-radius:1.5px"></div>
<div class="t" style="left:415px;top:401px;width:51.5px;text-align:center;font-size:6.3px;color:#fff">Stop sharing</div>
<div class="t" style="left:471.8px;top:400.5px;font-size:6.2px;color:#8aa0c0">Hide</div>
<!-- inner taskbar contents -->
<svg class="a" style="left:7.5px;top:425px" width="8.5" height="8" viewBox="0 0 10 10" preserveAspectRatio="none"><g fill="#f4f4f4"><rect x="0" y="0.5" width="4.3" height="4"/><rect x="5" y="0" width="5" height="4.5"/><rect x="0" y="5.3" width="4.3" height="4"/><rect x="5" y="5.3" width="5" height="4.7"/></g></svg>
<div class="a" style="left:23.5px;top:419px;width:174.5px;height:19.5px;background:#f2f2f2"></div>
<svg class="a" style="left:29.5px;top:424.5px" width="8" height="9" viewBox="0 0 8 9"><circle cx="5" cy="3.2" r="2.5" fill="none" stroke="#444" stroke-width="0.9"/><line x1="3.2" y1="5" x2="0.6" y2="8" stroke="#444" stroke-width="1"/></svg>
<div class="t" style="left:44px;top:425px;font-size:7.4px;color:#555">Type here to search</div>
<div class="a" style="left:206px;top:425px;width:8px;height:8px;border:1.3px solid #e6e6e6;border-radius:50%"></div>
<div class="a" style="left:230px;top:425px;width:8px;height:7px;border-top:1px solid #ccc;border-bottom:1px solid #ccc"></div>
<div class="a" style="left:231.5px;top:427px;width:5px;height:3px;border:1px solid #ccc"></div>
<!-- store -->
<div class="a" style="left:254.5px;top:424px;width:11px;height:10px;background:#ececec"></div>
<div class="a" style="left:257px;top:421.5px;width:6px;height:3.5px;border:1px solid #ddd;border-bottom:none;border-radius:2px 2px 0 0"></div>
<div class="a" style="left:258.5px;top:427px;width:4px;height:4px;background:linear-gradient(90deg,#e05030 50%,#70b030 50%)"></div>
<!-- firefox -->
<div class="a" style="left:280.5px;top:423px;width:11px;height:11px;border-radius:50%;background:radial-gradient(circle at 60% 60%,#6a3aa8 0 30%,#ff6a2a 38%,#ffb02a 80%)"></div>
<!-- edge -->
<div class="a" style="left:305.5px;top:423px;width:11px;height:11px;border-radius:50%;background:conic-gradient(from 200deg,#1a7ad0,#30b0e0,#50d080,#1a7ad0)"></div>
<div class="a" style="left:309px;top:428px;width:5px;height:4px;border-radius:50%;background:#122"></div>
<!-- explorer -->
<div class="a" style="left:330.5px;top:424px;width:12px;height:9px;background:#e8c860"></div>
<div class="a" style="left:333px;top:428px;width:7px;height:4px;background:#5a9ad0"></div>
<!-- mail -->
<div class="a" style="left:355px;top:425px;width:12px;height:8px;background:#2a8ae0"></div>
<svg class="a" style="left:355px;top:425px" width="12" height="8"><path d="M0 0 L6 5 L12 0" fill="none" stroke="#e8f2fa" stroke-width="1.2"/></svg>
<!-- spotify -->
<div class="a" style="left:381.5px;top:423px;width:11px;height:11px;border-radius:50%;background:#1ed760"></div>
<div class="a" style="left:383.5px;top:426px;width:7px;height:5px;border-top:1px solid #111;border-bottom:1px solid #111"></div>
<div class="a" style="left:377px;top:437.5px;width:20px;height:1px;background:#9ab"></div>
<!-- ppt active -->
<div class="a" style="left:400px;top:419px;width:24px;height:19.5px;background:#3a3a3a"></div>
<div class="a" style="left:405.5px;top:423.5px;width:12px;height:10px;background:#d04a2a;border-radius:1px"></div>
<div class="t" style="left:409px;top:425px;font-size:7px;color:#fff;font-weight:bold">P</div>
<div class="a" style="left:400px;top:437.5px;width:24px;height:1px;background:#9ab"></div>
<!-- chrome -->
<div class="a" style="left:431px;top:423px;width:11px;height:11px;border-radius:50%;background:conic-gradient(from -60deg,#e0402a 0 120deg,#f8c020 120deg 240deg,#30a050 240deg 360deg)"></div>
<div class="a" style="left:434px;top:426px;width:5px;height:5px;border-radius:50%;background:#3a7ae0;border:1px solid #fff"></div>
<div class="a" style="left:427px;top:437.5px;width:20px;height:1px;background:#9ab"></div>
<!-- inner tray -->
<svg class="a" style="left:633px;top:420px" width="66" height="18" viewBox="0 0 66 18" fill="none" stroke="#c8c8c8" stroke-width="0.9">
  <path d="M1 10 L4 7 L7 10"/>
  <path d="M12 7.5 L14 7.5 L16.5 5 L16.5 13 L14 10.5 L12 10.5 Z"/><path d="M18 7.5 Q19 9 18 10.5"/><path d="M19.5 6 Q21.5 9 19.5 12"/>
  <path d="M26 13 A7 7 0 0 1 32 7" stroke="#999"/><path d="M28 13 A5 5 0 0 1 32 9" stroke="#999"/><path d="M30 13 A3 3 0 0 1 32 11" stroke="#999"/>
  <rect x="37.5" y="7" width="7" height="5" fill="#ddd" stroke="#ddd"/><rect x="44.5" y="8.5" width="1" height="2" fill="#ddd" stroke="none"/>
  <rect x="49.5" y="4.5" width="12" height="9" stroke="#aaa"/><path d="M52 10.5 L59 10.5" stroke="#aaa"/>
</svg>
<div class="t" style="left:699.7px;top:426px;font-size:6.6px;color:#dcdcdc">ENG</div>
<div class="t" style="left:726px;top:421.5px;font-size:6.4px;color:#dcdcdc">15:33</div>
<div class="t" style="left:717.6px;top:431px;font-size:6.4px;color:#dcdcdc">30-03-2021</div>
<svg class="a" style="left:757px;top:424px" width="12" height="13" viewBox="0 0 12 13"><path d="M0 0 L9 0 L9 8 L3 8 L1 10 L1 8 L0 8 Z" fill="#e8e8e8"/><g stroke="#555" stroke-width="0.7"><line x1="1.5" y1="2" x2="7.5" y2="2"/><line x1="1.5" y1="4" x2="7.5" y2="4"/><line x1="1.5" y1="6" x2="5.5" y2="6"/></g><circle cx="8.5" cy="9" r="3" fill="#1b2a20" stroke="#ddd" stroke-width="0.7"/><text x="7.3" y="10.8" font-size="4.5" fill="#eee" font-family="Liberation Sans">3</text></svg>
<div class="a" style="left:777px;top:419px;width:1px;height:20px;background:#444"></div>
</div>
<!-- dark gap -->
<div class="a" style="left:0;top:439px;width:779px;height:42px;background:#131313"></div>
<!-- webcam -->
<div class="a" style="left:780px;top:147px;width:244px;height:146px;overflow:hidden;background:#fbd6da">
<svg class="a" style="left:0;top:0" width="244" height="146" viewBox="0 0 244 146">
  <defs>
    <filter id="wb" x="-10%" y="-10%" width="120%" height="120%"><feGaussianBlur stdDeviation="1.6"/></filter>
    <filter id="wb2" x="-20%" y="-20%" width="140%" height="140%"><feGaussianBlur stdDeviation="0.9"/></filter>
    <radialGradient id="bgp" cx="0.45" cy="0.4" r="0.8"><stop offset="0" stop-color="#fde2e4"/><stop offset="1" stop-color="#f8cdd3"/></radialGradient>
    <radialGradient id="face" cx="0.45" cy="0.4" r="0.6"><stop offset="0" stop-color="#9c826e"/><stop offset="0.65" stop-color="#7e6856"/><stop offset="1" stop-color="#5a463a"/></radialGradient>
  </defs>
  <rect x="0" y="0" width="244" height="146" fill="url(#bgp)"/>
  <g filter="url(#wb2)">
    <ellipse cx="21" cy="3.4" rx="3" ry="4" fill="#d070a8"/>
    <ellipse cx="77" cy="4.3" rx="6" ry="5" fill="#e8502a"/>
    <ellipse cx="68" cy="20" rx="4" ry="3" fill="#9a80d0"/>
    <ellipse cx="72" cy="24" rx="3" ry="2" fill="#e070a0"/>
    <ellipse cx="91" cy="20" rx="6" ry="6" fill="#e02a22"/>
    <ellipse cx="85.5" cy="28.5" rx="3" ry="2.5" fill="#d83030"/>
    <ellipse cx="98" cy="12" rx="3" ry="4" fill="#b060b0"/>
    <ellipse cx="58.4" cy="41.3" rx="4" ry="4" fill="#e86030"/>
    <ellipse cx="51" cy="38.5" rx="2.5" ry="2" fill="#7890d0"/>
    <ellipse cx="77" cy="42.7" rx="3" ry="2" fill="#e08090"/>
    <ellipse cx="91" cy="40" rx="3" ry="3" fill="#f09040"/>
    <ellipse cx="12.8" cy="32.8" rx="1.2" ry="1.2" fill="#806060"/>
    <ellipse cx="5.7" cy="54" rx="4" ry="2" fill="#f0d070"/>
    <ellipse cx="15.7" cy="61.3" rx="1.5" ry="4" fill="#d04050" transform="rotate(40 15.7 61.3)"/>
    <ellipse cx="28.5" cy="68.4" rx="1.3" ry="6" fill="#d04050" transform="rotate(25 28.5 68.4)"/>
    <ellipse cx="70" cy="65.5" rx="1.2" ry="1.2" fill="#705050"/>
    <ellipse cx="58.4" cy="75.5" rx="2.5" ry="1.5" fill="#d84848"/>
    <ellipse cx="67" cy="85.5" rx="4" ry="3" fill="#e06070"/>
    <ellipse cx="73" cy="90" rx="2" ry="1.5" fill="#c05070"/>
    <ellipse cx="85.5" cy="74" rx="1.5" ry="1.5" fill="#b07070"/>
    <ellipse cx="57" cy="92.6" rx="1.5" ry="1.5" fill="#606070"/>
    <ellipse cx="12.8" cy="98.3" rx="8" ry="2.5" fill="#9050c8" transform="rotate(15 12.8 98.3)"/>
    <ellipse cx="27" cy="101" rx="4" ry="6" fill="#e88050"/>
    <ellipse cx="47" cy="104" rx="2.5" ry="7.5" fill="#d83870" transform="rotate(20 47 104)"/>
    <ellipse cx="4.3" cy="116.8" rx="4" ry="2" fill="#e03a30"/>
    <ellipse cx="12.8" cy="106.8" rx="2.5" ry="1.5" fill="#e04040"/>
    <ellipse cx="48.4" cy="122.5" rx="3" ry="2" fill="#e03a3a"/>
    <ellipse cx="85.5" cy="102.6" rx="4" ry="3" fill="#f0a050"/>
    <ellipse cx="94" cy="111" rx="5" ry="4" fill="#b070c8"/>
    <ellipse cx="100" cy="104" rx="3" ry="3" fill="#e07090"/>
    <ellipse cx="2.8" cy="125" rx="3" ry="1.5" fill="#e04848"/>
    <ellipse cx="71" cy="128" rx="2" ry="1.5" fill="#d04040"/>
    <ellipse cx="100" cy="34" rx="2.5" ry="4" fill="#8060d0"/>
    <ellipse cx="100" cy="60" rx="2" ry="2" fill="#c06080"/>
    <ellipse cx="190" cy="17" rx="5" ry="5" fill="#e83a2a"/>
    <ellipse cx="220" cy="11.4" rx="6" ry="5" fill="#e8302a"/>
    <ellipse cx="211" cy="20" rx="4" ry="4" fill="#d050a0" transform="rotate(30 211 20)"/>
    <ellipse cx="205.6" cy="41.3" rx="5" ry="6" fill="#e0402e"/>
    <ellipse cx="235.5" cy="32.8" rx="4" ry="2.5" fill="#c070c0"/>
    <ellipse cx="191.4" cy="51.3" rx="3" ry="3" fill="#f0c050"/>
    <ellipse cx="224" cy="67" rx="4.5" ry="4.5" fill="#c040a0" transform="rotate(45 224 67)"/>
    <ellipse cx="212.8" cy="77" rx="2" ry="2" fill="#a02030"/>
    <ellipse cx="218.5" cy="87" rx="5" ry="6" fill="#e83a2a"/>
    <ellipse cx="241" cy="61" rx="2.5" ry="4" fill="#a060c0"/>
    <ellipse cx="204" cy="94" rx="2" ry="6" fill="#d070b0" transform="rotate(10 204 94)"/>
    <ellipse cx="187" cy="80" rx="4" ry="3" fill="#9a60c8"/>
    <ellipse cx="183" cy="97" rx="5" ry="5" fill="#e05030"/>
    <ellipse cx="188.5" cy="108" rx="5" ry="5" fill="#f09030"/>
    <ellipse cx="195.7" cy="114" rx="3" ry="3" fill="#f0c060"/>
    <ellipse cx="222.7" cy="114" rx="4" ry="4" fill="#d070c0"/>
    <ellipse cx="215.6" cy="100" rx="2" ry="2" fill="#8a7a80"/>
    <ellipse cx="214" cy="129.6" rx="3" ry="2" fill="#7090d0"/>
    <ellipse cx="231" cy="131" rx="3" ry="2" fill="#c0a070"/>
    <ellipse cx="187" cy="119.7" rx="3" ry="3" fill="#e070a0"/>
    <ellipse cx="235.5" cy="5.7" rx="3" ry="2" fill="#f0e0a0"/>
    <ellipse cx="208.5" cy="5.7" rx="3" ry="2" fill="#f0d070"/>
    <ellipse cx="198" cy="24" rx="3" ry="2" fill="#f0a040"/>
    <ellipse cx="178" cy="70" rx="2" ry="3" fill="#e0a040"/>
    <ellipse cx="30" cy="142" rx="22" ry="6" fill="#a888b8"/>
  </g>
  <g filter="url(#wb)">
    <!-- neck -->
    <path d="M116 80 L174 80 L169 104 L158 150 L134 150 L119 110 Z" fill="#4a3e34"/>
    <path d="M134 104 L158 104 L153 150 L140 150 Z" fill="#54483a"/>
    <ellipse cx="146" cy="106" rx="22" ry="7" fill="#3a2f28"/>
    <!-- shirt -->
    <path d="M8 152 L40.8 138.4 L60 131 L87.6 122.8 L114 104.6 L119 110 L135.5 152 Z" fill="#1c1614"/>
    <path d="M157 152 L168 104.6 L171.4 101 L185.8 119 L239.7 140.5 L248 144 L248 152 Z" fill="#1c1614"/>
    <!-- ears -->
    <ellipse cx="105" cy="62" rx="5" ry="9" fill="#5e4c40"/>
    <ellipse cx="184" cy="60" rx="5" ry="9" fill="#5e4c40"/>
    <!-- face -->
    <path d="M108 40 Q106 78 118 92 Q132 104 146 104 Q160 104 172 92 Q184 78 182 40 Q180 10 146 8 Q110 10 108 40 Z" fill="url(#face)"/>
    <ellipse cx="146" cy="24" rx="26" ry="11" fill="#a48a76"/>
    <!-- hair -->
    <path d="M99 60 Q98 30 106 14 Q110 4 114 -4 L174 -4 Q180 4 184 14 Q190 30 189 60 L183 58 Q182 36 174 20 Q150 8 118 20 Q110 36 108 60 Z" fill="#16110f"/>
    
    <!-- brows & eyes -->
    <path d="M116 33 Q127 28 139 32" stroke="#2a1e1a" stroke-width="3" fill="none"/>
    <path d="M153 32 Q165 28 176 33" stroke="#2a1e1a" stroke-width="3" fill="none"/>
    <ellipse cx="128" cy="44.5" rx="7.5" ry="3.4" fill="#241a16"/>
    <ellipse cx="162" cy="44.5" rx="7.5" ry="3.4" fill="#241a16"/>
    <path d="M142 48 L139 63 L151 63 L148 48 Z" fill="#9a8270"/>
    <!-- mustache -->
    <path d="M124 77 Q132 64 146 66 Q160 64 170 77 L166 80 Q146 72 128 80 Z" fill="#1e1612"/>
    <ellipse cx="147" cy="80" rx="10" ry="3.4" fill="#b0a49a"/>
    <ellipse cx="146" cy="93" rx="13" ry="6" fill="#6e5a4a"/>
  </g>
</svg>
<div class="a" style="left:0;top:116px;width:244px;height:30px;background:linear-gradient(rgba(40,20,40,0),rgba(40,20,40,.28))"></div>
<div class="t" style="left:7px;top:132px;font-size:9.6px;color:#f6f4f8;text-shadow:0 0 1px rgba(0,0,0,.5),0 0 0.5px #fff">Neha K</div>
</div>

<!-- main taskbar -->
<div class="a" style="left:0;top:481px;width:1024px;height:31px;background:#1e1e1e"></div>
<!-- main taskbar contents -->
<svg class="a" style="left:11.3px;top:490.6px" width="13" height="12.5" viewBox="0 0 13 12.5"><g fill="#fff"><rect x="0" y="0.8" width="6" height="5.3"/><rect x="6.8" y="0" width="6.2" height="6.1"/><rect x="0" y="6.9" width="6" height="5.1"/><rect x="6.8" y="6.9" width="6.2" height="5.6"/></g></svg>
<div class="a" style="left:35.7px;top:481.8px;width:261.7px;height:30.2px;background:#f0f0f0"></div>
<svg class="a" style="left:44.5px;top:490.5px" width="13" height="13" viewBox="0 0 13 13"><circle cx="8" cy="5" r="4.2" fill="none" stroke="#333" stroke-width="1.2"/><line x1="5" y1="8" x2="0.8" y2="12.3" stroke="#333" stroke-width="1.3"/></svg>
<div class="t" style="left:66.4px;top:491.9px;font-size:11px;color:#4a4a4a">Type here to search</div>
<div class="a" style="left:309.5px;top:490.8px;width:11.8px;height:11.8px;border:1.9px solid #f4f4f4;border-radius:50%"></div>
<svg class="a" style="left:345.7px;top:490.7px" width="14" height="12" viewBox="0 0 14 12" fill="none" stroke="#eee" stroke-width="1.1"><line x1="0" y1="0.6" x2="8" y2="0.6"/><line x1="0" y1="11.4" x2="8" y2="11.4"/><rect x="1.3" y="3" width="6" height="6"/><line x1="11" y1="0" x2="11" y2="3"/><rect x="10" y="4.5" width="2" height="2" fill="#eee"/><line x1="11" y1="8" x2="11" y2="12"/></svg>
<!-- edge -->
<svg class="a" style="left:381.5px;top:487.5px" width="18" height="18" viewBox="0 0 18 18"><defs><linearGradient id="eg" x1="0.2" y1="0" x2="0.3" y2="1"><stop offset="0" stop-color="#36c0e0"/><stop offset="0.5" stop-color="#1a7ad8"/><stop offset="1" stop-color="#1a4fb0"/></linearGradient><filter id="egb"><feGaussianBlur stdDeviation="0.5"/></filter></defs><g filter="url(#egb)"><circle cx="9" cy="9" r="8.8" fill="url(#eg)"/><path d="M9 3 Q16 2.5 17.6 9 Q17.5 13 14.5 14.5 Q11 14 11 10.5 Q11 8 14 7.5 Q12 5 9 5.5Z" fill="#3ad870"/><ellipse cx="9.6" cy="10" rx="2.6" ry="3" fill="#0c2a5a"/><path d="M11 12 Q12.5 15 15 14" stroke="#0c2a5a" stroke-width="1" fill="none"/></g></svg>
<!-- explorer -->
<div class="a" style="left:420px;top:489.7px;width:16.5px;height:13.7px;background:#f5c542;border-radius:1px"></div>
<div class="a" style="left:420px;top:489.7px;width:7px;height:2px;background:#e8b030"></div>
<div class="a" style="left:423.5px;top:496px;width:9.5px;height:6px;background:#3b8fd0"></div>
<div class="a" style="left:413px;top:510px;width:30.3px;height:2px;background:#8ab6dc"></div>
<!-- store -->
<div class="a" style="left:456px;top:491.5px;width:17.6px;height:13.8px;background:#f4f4f4"></div>
<div class="a" style="left:460.5px;top:487.8px;width:8.6px;height:5px;border:1.3px solid #eee;border-bottom:none;border-radius:3px 3px 0 0"></div>
<div class="a" style="left:461.5px;top:495px;width:3px;height:3px;background:#f25022"></div>
<div class="a" style="left:465px;top:495px;width:3px;height:3px;background:#7fba00"></div>
<div class="a" style="left:461.5px;top:498.5px;width:3px;height:3px;background:#00a4ef"></div>
<div class="a" style="left:465px;top:498.5px;width:3px;height:3px;background:#ffb900"></div>
<!-- mail -->
<div class="a" style="left:493.3px;top:491.5px;width:19px;height:13.5px;background:#1e90e0"></div>
<svg class="a" style="left:493.3px;top:487.8px" width="19" height="17" viewBox="0 0 19 17"><path d="M0 4 L9.5 0 L19 4 Z" fill="#1a6cc0"/><path d="M0 4 L9.5 10 L19 4" fill="#e8f4fc"/><path d="M0 4 L9.5 10 L19 4" fill="none" stroke="#fff" stroke-width="0.8"/></svg>
<!-- chrome -->
<svg class="a" style="left:531px;top:487.5px" width="18.5" height="18.5" viewBox="-9 -9 18 18"><circle r="9" fill="#2da94f"/><path d="M0 0 L-7.8 -4.5 A9 9 0 0 1 7.8 -4.5 Z" fill="#e33b2e"/><path d="M0 0 L7.8 -4.5 A9 9 0 0 1 0 9 Z" fill="#fcc934"/><circle r="4.2" fill="#fff"/><circle r="3.3" fill="#1a73e8"/></svg>
<div class="a" style="left:525px;top:510px;width:30px;height:2px;background:#8ab6dc"></div>
<!-- word -->
<div class="a" style="left:569px;top:487.8px;width:16.5px;height:16px;background:#f4f6fa;border-radius:1px"></div>
<div class="t" style="left:569.5px;top:490px;font-size:12px;font-weight:bold;color:#2457b0">W</div>
<div class="a" style="left:570px;top:500px;width:14px;height:3px;background:#c8d4ea"></div>
<div class="a" style="left:562px;top:510px;width:31px;height:2px;background:#8ab6dc"></div>
<!-- paint -->
<svg class="a" style="left:604.5px;top:487.5px" width="19" height="18" viewBox="0 0 19 18"><ellipse cx="8" cy="11" rx="8" ry="6" fill="#e8e4dc"/><circle cx="4" cy="10" r="1.3" fill="#e04a3a"/><circle cx="7" cy="8" r="1.3" fill="#3a8ae0"/><circle cx="10" cy="9" r="1.3" fill="#f0c030"/><circle cx="5" cy="13" r="1.2" fill="#50b050"/><path d="M17 1 L10 13 L12 14 L18 3 Z" fill="#d8a050"/><path d="M10 13 L11 17 L12 14Z" fill="#c07a30"/></svg>
<div class="a" style="left:599px;top:510px;width:31px;height:2px;background:#8ab6dc"></div>
<!-- active video editor -->
<div class="a" style="left:634.3px;top:482px;width:36px;height:30px;background:#3d3d3d"></div>
<svg class="a" style="left:642px;top:487.8px" width="20" height="18" viewBox="0 0 20 18"><path d="M1 5 L17 1 L18 4 L2 7Z" fill="#3ab0f0"/><rect x="1" y="6" width="18" height="11.5" rx="1" fill="#1e78d0"/><path d="M8 8.5 L14 11.7 L8 15Z" fill="#fff"/></svg>
<div class="a" style="left:634.3px;top:510px;width:36px;height:2px;background:#8ab6dc"></div>
<!-- tray -->
<svg class="a" style="left:848.5px;top:492.5px" width="10" height="6" viewBox="0 0 10 6"><path d="M0.5 5.5 L5 1 L9.5 5.5" fill="none" stroke="#eee" stroke-width="1.2"/></svg>
<svg class="a" style="left:866px;top:490.5px" width="13" height="11" viewBox="0 0 13 11" fill="none" stroke="#eee" stroke-width="1"><rect x="3" y="3.5" width="9" height="6" fill="#eee"/><rect x="12" y="5" width="1" height="3" fill="#eee" stroke="none"/><path d="M0.5 0.5 L0.5 3 L3 4.5"/><rect x="1" y="4.5" width="1.5" height="4" fill="#eee" stroke="none"/></svg>
<svg class="a" style="left:886.5px;top:490px" width="11" height="12" viewBox="0 0 11 12" fill="none" stroke="#ddd" stroke-width="0.9"><path d="M0.5 11.5 A11 11 0 0 1 10.5 1.5"/><path d="M3 11.5 A8.5 8.5 0 0 1 10.5 4"/><path d="M5.5 11.5 A6 6 0 0 1 10.5 6.5"/><path d="M8 11.5 A3.5 3.5 0 0 1 10.5 9"/></svg>
<svg class="a" style="left:901.5px;top:489.5px" width="14" height="13" viewBox="0 0 14 13" fill="none" stroke="#eee" stroke-width="1"><path d="M0.5 4.5 L3 4.5 L6.5 1 L6.5 12 L3 8.5 L0.5 8.5 Z"/><path d="M8.5 4.5 Q10 6.5 8.5 8.5"/><path d="M10.5 2.5 Q13 6.5 10.5 10.5"/></svg>
<div class="t" style="left:921.5px;top:492.3px;font-size:8.4px;color:#f0f0f0">ENG</div>
<div class="t" style="left:960px;top:485px;font-size:8.6px;color:#f0f0f0">12:50</div>
<div class="t" style="left:949.4px;top:499.8px;font-size:8.5px;color:#f0f0f0">31-03-2021</div>
<svg class="a" style="left:1007px;top:491px" width="14" height="13" viewBox="0 0 14 13"><path d="M0 0 L12 0 L12 10 L4 10 L1 12.5 L1 10 L0 10 Z" fill="#f4f4f4"/><g stroke="#444" stroke-width="0.9"><line x1="2.5" y1="3" x2="9.5" y2="3"/><line x1="2.5" y1="5.3" x2="9.5" y2="5.3"/><line x1="2.5" y1="7.6" x2="7" y2="7.6"/></g><circle cx="11" cy="10.5" r="2.5" fill="#1f1f1f" stroke="#eee" stroke-width="0.8"/></svg>
</body></html>
